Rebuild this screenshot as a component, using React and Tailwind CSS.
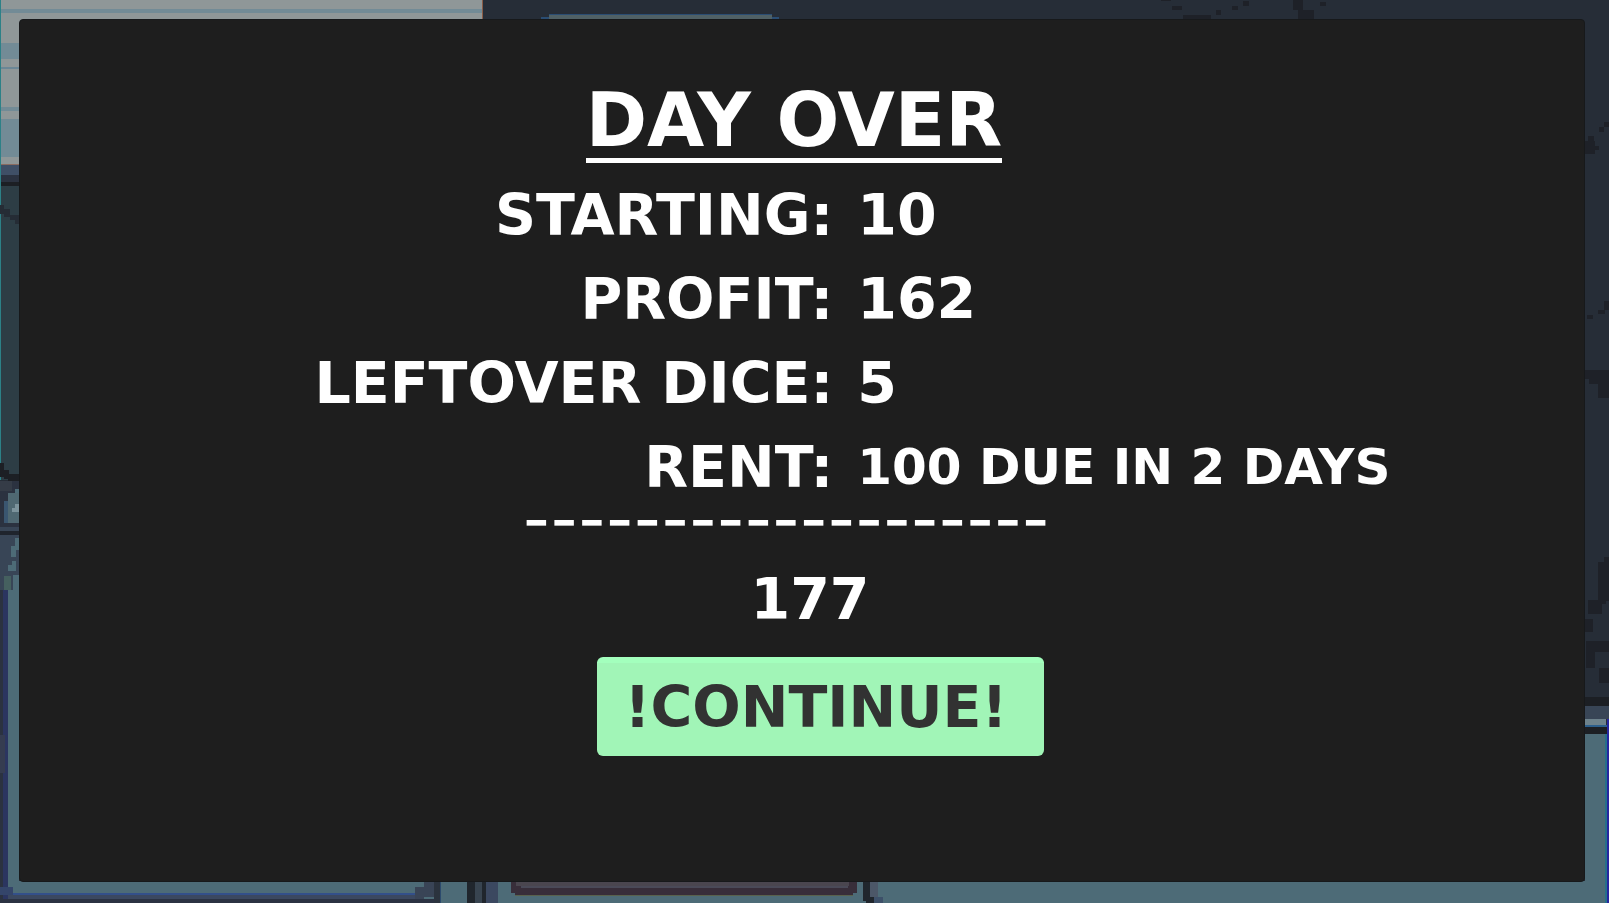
const rows = [
  { label: 'STARTING:', value: '10' },
  { label: 'PROFIT:', value: '162' },
  { label: 'LEFTOVER DICE:', value: '5' },
  { label: 'RENT:', value: '100 DUE IN 2 DAYS', small: true },
]

// [x, y, width, height, fill]
const blocks = [
  // Sky and wall
  [0, 0, 1609, 903, '#262d37'],
  [0, 0, 482, 164, '#8f9798'],
  [482, 0, 1, 19, '#8a5b45'],
  [0, 9, 482, 4, '#728b96'],
  [0, 43, 19, 16, '#728b96'],
  [0, 67, 19, 2, '#6b8796'],
  [0, 107, 19, 4, '#728b96'],
  [0, 119, 19, 38, '#728b96'],
  [0, 164, 19, 1, '#8a6b60'],
  [0, 165, 19, 10, '#3f4f66'],
  [0, 175, 19, 7, '#2b3240'],
  [0, 182, 19, 4, '#1c1f24'],
  [0, 186, 19, 294, '#2d3d45'],
  [0, 0, 1, 480, '#2c8187'],
  [0, 205, 4, 9, '#252c35'],
  [4, 209, 6, 8, '#252c35'],
  [10, 215, 9, 5, '#252c35'],
  [15, 219, 4, 5, '#252c35'],
  // Left ledge
  [0, 463, 4, 14, '#1c1f24'],
  [4, 470, 5, 9, '#1c1f24'],
  [8, 474, 11, 7, '#1c1f24'],
  [0, 481, 19, 50, '#2b3240'],
  [0, 481, 12, 10, '#353c47'],
  [15, 489, 4, 5, '#4d6b77'],
  [8, 493, 11, 30, '#4f6872'],
  [4, 501, 4, 22, '#3a5670'],
  [12, 508, 7, 4, '#7c939c'],
  [15, 504, 4, 5, '#7c939c'],
  [0, 527, 19, 4, '#384556'],
  [0, 531, 19, 4, '#1f242d'],
  [0, 535, 19, 60, '#384556'],
  [15, 538, 4, 12, '#4d6b77'],
  [11, 546, 5, 11, '#4d6b77'],
  [12, 561, 4, 10, '#4d6b77'],
  [8, 565, 6, 6, '#4d6b77'],
  [4, 576, 7, 15, '#45605f'],
  [13, 575, 6, 16, '#4d6b77'],
  [0, 590, 3, 313, '#2b3240'],
  [3, 590, 5, 313, '#2b3560'],
  [8, 590, 11, 313, '#4d6b77'],
  [0, 735, 5, 38, '#353c50'],
  // Floor
  [8, 881, 1601, 22, '#4d6b77'],
  [0, 887, 13, 8, '#34456a'],
  [13, 893, 402, 2, '#33508a'],
  [8, 895, 416, 4, '#3b4860'],
  [0, 899, 434, 4, '#2b3242'],
  [424, 881, 10, 16, '#394456'],
  [415, 887, 9, 12, '#394456'],
  [434, 881, 7, 22, '#2b333e'],
  [440, 881, 1, 22, '#2b4a6d'],
  [467, 881, 8, 22, '#20262d'],
  [475, 881, 7, 22, '#384450'],
  [482, 881, 4, 22, '#20262d'],
  [486, 881, 12, 22, '#3b4860'],
  [511, 881, 346, 12, '#382e3a'],
  [515, 893, 338, 2, '#382e3a'],
  [515, 895, 338, 1, '#59624d'],
  [516, 881, 333, 5, '#4a464f'],
  [521, 886, 327, 2, '#4a4a58'],
  [863, 881, 7, 20, '#20262d'],
  [866, 897, 8, 6, '#20262d'],
  [870, 881, 8, 16, '#4c5768'],
  [874, 897, 9, 6, '#3d5069'],
  // Sign edge above the panel
  [541, 17, 238, 2, '#2a4d73'],
  [549, 14, 223, 1, '#2a4d73'],
  [549, 15, 223, 4, '#4f6065'],
  // Twigs on top
  [1161, 0, 10, 1, '#1e2128'],
  [1172, 6, 10, 4, '#1e2128'],
  [1183, 15, 28, 4, '#1e2128'],
  [1216, 10, 5, 5, '#1e2128'],
  [1232, 6, 6, 4, '#1e2128'],
  [1243, 1, 6, 5, '#1e2128'],
  [1293, 0, 10, 10, '#1e2128'],
  [1298, 10, 16, 9, '#1e2128'],
  [1320, 2, 6, 4, '#1e2128'],
  // Twigs on the right
  [1585, 141, 10, 13, '#1e2128'],
  [1588, 136, 6, 6, '#1e2128'],
  [1594, 146, 5, 4, '#1e2128'],
  [1599, 127, 5, 5, '#1e2128'],
  [1604, 122, 5, 5, '#1e2128'],
  [1587, 315, 6, 4, '#1e2128'],
  [1598, 310, 7, 4, '#1e2128'],
  [1604, 301, 5, 9, '#1e2128'],
  [1585, 370, 24, 9, '#1e2128'],
  [1589, 379, 20, 5, '#1e2128'],
  [1598, 384, 11, 14, '#1e2128'],
  [1604, 557, 5, 44, '#1e2128'],
  [1598, 562, 8, 42, '#1e2128'],
  [1588, 600, 14, 14, '#1e2128'],
  [1585, 619, 8, 13, '#1e2128'],
  [1586, 641, 9, 27, '#1e2128'],
  [1595, 641, 14, 11, '#1e2128'],
  [1599, 668, 10, 15, '#1e2128'],
  // Right ledge
  [1585, 697, 24, 9, '#1c1f24'],
  [1585, 706, 24, 13, '#384556'],
  [1585, 719, 21, 6, '#6d828c'],
  [1585, 725, 24, 2, '#2c5f8c'],
  [1585, 727, 24, 7, '#1c1f24'],
  [1585, 734, 24, 169, '#4d6b77'],
  [1605, 734, 2, 169, '#267089'],
  [1607, 719, 2, 184, '#2727a0'],
]

function Backdrop() {
  return (
    <svg
      className="absolute inset-0 h-full w-full"
      viewBox="0 0 1609 903"
      preserveAspectRatio="none"
      shapeRendering="crispEdges"
      aria-hidden="true"
    >
      {blocks.map(([x, y, w, h, fill], i) => (
        <rect key={i} x={x} y={y} width={w} height={h} fill={fill} />
      ))}
    </svg>
  )
}

export default function App() {
  return (
    <div className="relative flex min-h-screen bg-[#262d37] pt-[19px] pr-6 pb-[21px] pl-[19px] font-['DejaVu_Sans',sans-serif] font-bold text-white">
      <Backdrop />

      <main className="relative flex flex-1 flex-col items-center rounded border border-[#17191b] bg-[#1e1e1e] pt-16">
        <h1 className="mr-4 border-b-[5px] border-white pb-0.5 text-[74px] leading-[72px]">DAY OVER</h1>

        {/* Summary */}
        <dl className="mt-2.5 w-full text-[57px] leading-[84px]">
          {rows.map(row => (
            <div key={row.label} className="grid grid-cols-[52%_1fr] gap-6">
              <dt className="text-right whitespace-nowrap">{row.label}</dt>
              <dd className={row.small ? 'text-[50px] leading-[84px] whitespace-nowrap' : 'whitespace-nowrap'}>{row.value}</dd>
            </div>
          ))}
        </dl>

        <p className="mt-0.5 mr-8 font-['Inter',sans-serif] text-[60px] leading-4 font-medium whitespace-nowrap">-------------------</p>
        <p className="mt-11 ml-4 text-[57px] leading-[56px]">177</p>

        <button
          type="button"
          className="mt-[30px] ml-9 cursor-pointer rounded-md border-t-[6px] border-[#a3ffbd] bg-[#a1f5b7] pt-4 pr-9 pb-[21px] pl-7 text-[57px] leading-[56px] text-[#323232]"
        >
          !CONTINUE!
        </button>
      </main>
    </div>
  )
}
